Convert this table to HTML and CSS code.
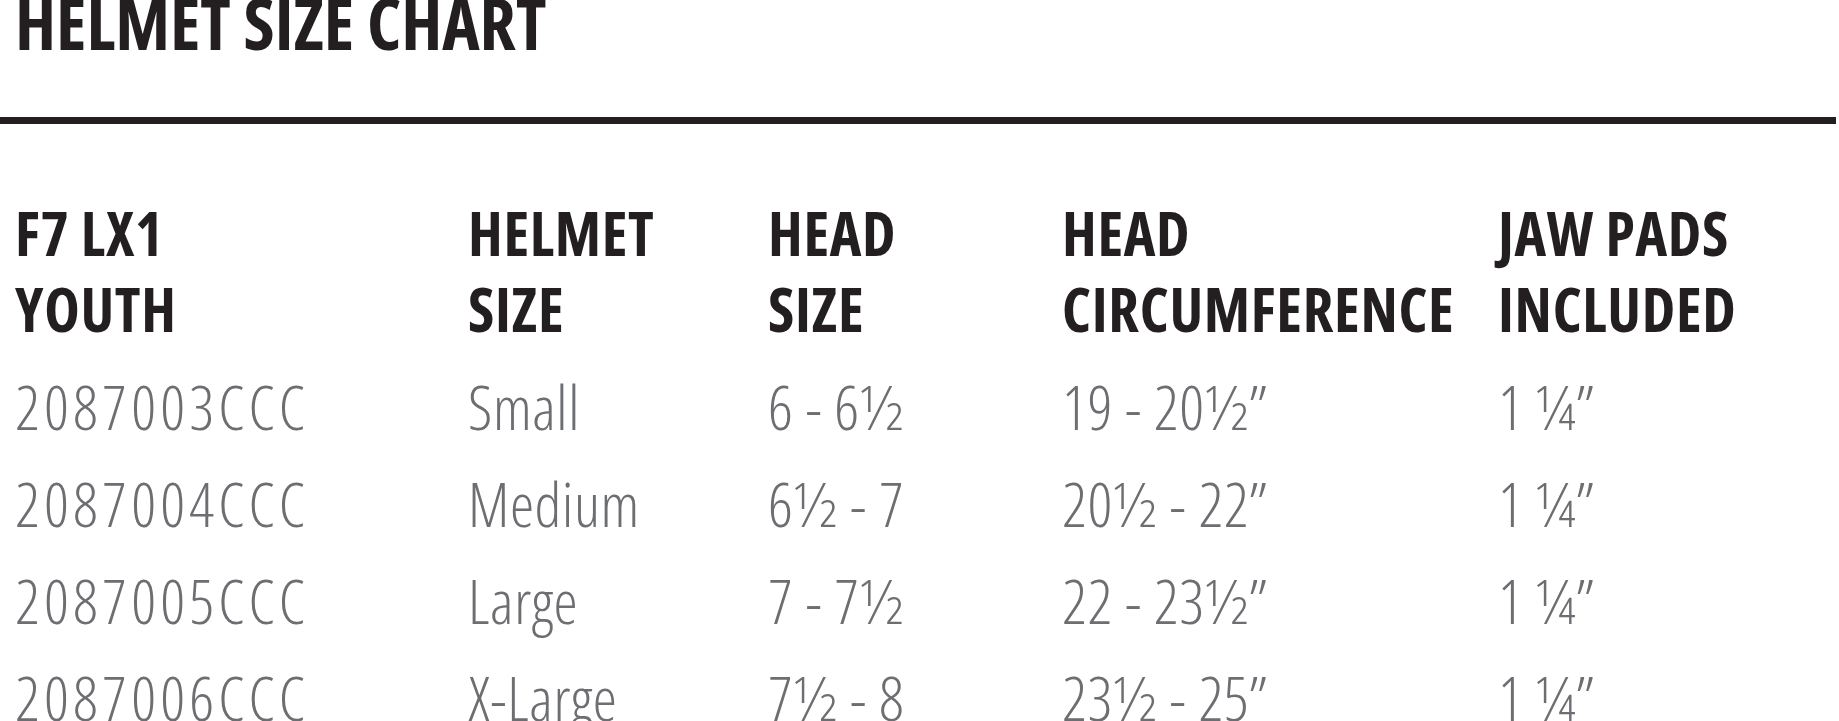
FILE: index.html
```html
<!DOCTYPE html>
<html lang="en">
<head>
<meta charset="utf-8">
<title>Helmet Size Chart</title>
<link rel="stylesheet" href="styles.css">
</head>
<body>
<div class="page">
  <h1 class="title">HELMET SIZE CHART</h1>
  <div class="rule"></div>
  <div class="chart">
    <div class="head">F7 LX1<br>YOUTH</div>
    <div class="head">HELMET<br>SIZE</div>
    <div class="head">HEAD<br>SIZE</div>
    <div class="head">HEAD<br>CIRCUMFERENCE</div>
    <div class="head">JAW PADS<br>INCLUDED</div>

    <div class="cell code">2087003CCC</div>
    <div class="cell">Small</div>
    <div class="cell">6 - 6½</div>
    <div class="cell">19 - 20½”</div>
    <div class="cell">1 ¼”</div>

    <div class="cell code">2087004CCC</div>
    <div class="cell">Medium</div>
    <div class="cell">6½ - 7</div>
    <div class="cell">20½ - 22”</div>
    <div class="cell">1 ¼”</div>

    <div class="cell code">2087005CCC</div>
    <div class="cell">Large</div>
    <div class="cell">7 - 7½</div>
    <div class="cell">22 - 23½”</div>
    <div class="cell">1 ¼”</div>

    <div class="cell code">2087006CCC</div>
    <div class="cell">X-Large</div>
    <div class="cell">7½ - 8</div>
    <div class="cell">23½ - 25”</div>
    <div class="cell">1 ¼”</div>
  </div>
</div>
</body>
</html>
```
FILE: styles.css
```css
html, body {
  margin: 0;
  padding: 0;
  background: #ffffff;
}
.page {
  width: 1836px;
  height: 721px;
  overflow: hidden;
  font-family: "Open Sans", "DejaVu Sans Condensed", sans-serif;
  font-stretch: 75%;
}
.title {
  margin: 0;
  padding-left: 15px;
  font-size: 71px;
  line-height: 46px;
  font-weight: 700;
  color: #231f20;
  letter-spacing: 0;
}
.rule {
  margin-top: 71px;
  height: 7px;
  background: #231f20;
}
.chart {
  margin-top: 71px;
  padding-left: 15px;
  display: grid;
  grid-template-columns: 453px 300px 294px 436px auto;
}
.head {
  font-size: 60px;
  line-height: 76px;
  font-weight: 700;
  color: #231f20;
  letter-spacing: 0.7px;
  margin-bottom: 11px;
  white-space: nowrap;
}
.cell {
  font-size: 61px;
  line-height: 97px;
  font-weight: 300;
  color: #6d6e71;
  letter-spacing: 0.6px;
  white-space: nowrap;
}
.code {
  letter-spacing: 4.2px;
}
```
